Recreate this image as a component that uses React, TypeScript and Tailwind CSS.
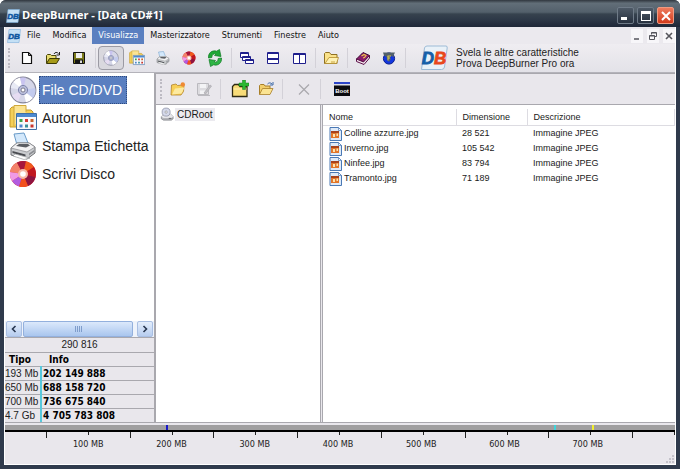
import React from 'react';

interface IconProps {
  className?: string;
}

const NewIcon: React.FC<IconProps> = ({ className = 'w-4 h-4' }) => (
  <svg viewBox="0 0 16 16" className={className} aria-hidden="true">
    <path d="M3.500 2.500h6l3 3v8h-9z" fill="#fff" stroke="#111" strokeWidth="1.200" />
    <path d="M9.500 2.500v3h3" fill="none" stroke="#111" />
  </svg>
);

const OpenIcon: React.FC<IconProps> = ({ className = 'w-4 h-4' }) => (
  <svg viewBox="0 0 16 16" className={className} aria-hidden="true">
    <path d="M1.500 13V5.500l1-1h3l1 1H11v3" fill="#e8dc70" stroke="#4a4608" />
    <path d="M1.500 13.500 4.500 8.500h10L11.500 13.500z" fill="#a69a18" stroke="#3a3806" />
    <path d="M9 4c1-2 3-2 4.500-.5M14.500 2v3h-3" fill="none" stroke="#222" />
  </svg>
);

const SaveIcon: React.FC<IconProps> = ({ className = 'w-4 h-4' }) => (
  <svg viewBox="0 0 16 16" className={className} aria-hidden="true">
    <path d="M2.500 2.500h11v11h-11z" fill="#7b7a18" stroke="#111" />
    <path d="M5 3h6v5H5z" fill="#eee" />
    <path d="M4 9.500h8V14H4z" fill="#151515" />
    <path d="M9 10.500h2V13H9z" fill="#ddd" />
  </svg>
);

const DiscIcon: React.FC<IconProps> = ({ className = 'w-4 h-4' }) => (
  <svg viewBox="0 0 28 28" className={className} aria-hidden="true">
    <circle cx="14" cy="14" r="12.800" fill="#d5d6e8" stroke="#868699" strokeWidth="1.200" />
    <path d="M14 14 4 6a12.500 12.500 0 0 1 7-4.500z" fill="#fff" />
    <path d="M14 14 24 22a12.500 12.500 0 0 1-7 4.300z" fill="#fff" />
    <path d="M14 14 11 1.800a12.500 12.500 0 0 1 6 0z" fill="#c9c4f0" />
    <path d="M14 14 1.800 12a12.500 12.500 0 0 1 2.200-6z" fill="#e8eaf5" />
    <path d="M14 14 26.300 12a12.500 12.500 0 0 1-2.300 10z" fill="#c3cbee" />
    <path d="M14 14 9 25.500a12.500 12.500 0 0 1-6-6z" fill="#e6dcf2" />
    <circle cx="14" cy="14" r="4.600" fill="#b9bdda" stroke="#7f86ad" />
    <circle cx="14" cy="14" r="2" fill="#fff" stroke="#667" strokeWidth=".8" />
  </svg>
);

const BurnIcon: React.FC<IconProps> = ({ className = 'w-4 h-4' }) => (
  <svg viewBox="0 0 28 28" className={className} aria-hidden="true">
    <circle cx="14" cy="14" r="13" fill="#d4242a" />
    <path d="M14 14 1 12A13 13 0 0 1 8 2.500z" fill="#f2826a" />
    <path d="M14 14 8 2.500A13 13 0 0 1 17 1.300z" fill="#a5163c" />
    <path d="M14 14 17 1.300A13 13 0 0 1 25 7z" fill="#ef5a1e" />
    <path d="M14 14 25 7a13 13 0 0 1 1.500 10z" fill="#c01820" />
    <path d="M14 14 26.500 17A13 13 0 0 1 19 26z" fill="#8e1440" />
    <path d="M14 14 19 26a13 13 0 0 1-9 .5z" fill="#f2501e" />
    <path d="M14 14 10 26.500A13 13 0 0 1 3 21z" fill="#b25ce0" />
    <path d="M14 14 3 21a13 13 0 0 1-2-9z" fill="#f09ae6" />
    <circle cx="14" cy="14" r="5" fill="#f6b9a8" />
    <circle cx="14" cy="14" r="2.800" fill="#fff" />
  </svg>
);

const AutorunIcon: React.FC<IconProps> = ({ className = 'w-4 h-4' }) => (
  <svg viewBox="0 0 28 28" className={className} aria-hidden="true">
    <path d="M1 23V5l2-2h6l2 3h11l2 2v15z" fill="#f4cf58" stroke="#c39a2a" />
    <path d="M5 22V1.500h12V8" fill="#fbe493" stroke="#d0a83a" />
    <path d="M7.500 9.500h20v16h-20z" fill="#f7f9fc" stroke="#3f6fa6" />
    <path d="M8 10h19v3H8z" fill="#4d8ad0" />
    <path d="M10.500 15h3v3h-3z" fill="#3fa54a" />
    <path d="M16 15h3v3h-3z" fill="#d83a36" />
    <path d="M21.500 15h3v3h-3z" fill="#c9652c" />
    <path d="M10.500 20.500h3v3h-3z" fill="#4f87d0" />
    <path d="M16 20.500h3v3h-3z" fill="#3a8f9a" />
    <path d="M21.500 20.500h3v3h-3z" fill="#c9362f" />
  </svg>
);

const PrinterIcon: React.FC<IconProps> = ({ className = 'w-4 h-4' }) => (
  <svg viewBox="0 0 28 28" className={className} aria-hidden="true">
    <path d="M8 13 5 2l10-1 4 10z" fill="#d3e8fb" stroke="#6b9cc9" />
    <path d="M2 16 8 11h12l6 4v6l-8 6-16-4z" fill="#c9cbce" stroke="#6e7074" />
    <path d="M2 16 8 11h12l6 4-8 5z" fill="#f3f3f4" stroke="#85878b" strokeWidth=".7" />
    <path d="m7 14 3-2h9l2 1.500-4 2z" fill="#5b5e63" />
    <path d="m3.500 19 13 3.500v2L3.500 21z" fill="#4b4d52" />
    <path d="m6 22 11 3 4 1-6 1.500L4 24z" fill="#fff" stroke="#8c8e92" strokeWidth=".6" />
    <path d="M20 21.500 25 18v2l-5 3.500z" fill="#8b8d92" />
  </svg>
);

const RefreshIcon: React.FC<IconProps> = ({ className = 'w-4 h-4' }) => (
  <svg viewBox="0 0 16 18" className={className} aria-hidden="true">
    <path d="M1.500 9C1 4 5 .8 9.500 2.200L12.500.5 14 7.500 7.500 6.500 9 5C6.500 4.200 4.800 6 4.800 8.500z" fill="#1fa836" stroke="#0f7a22" strokeWidth=".7" />
    <path d="M14.500 9C15 14 11 17.200 6.500 15.800L3.500 17.500 2 10.500 8.500 11.500 7 13C9.500 13.800 11.200 12 11.200 9.500z" fill="#2fb545" stroke="#0f7a22" strokeWidth=".7" />
  </svg>
);

const CascadeIcon: React.FC<IconProps> = ({ className = 'w-4 h-4' }) => (
  <svg viewBox="0 0 16 16" className={className} aria-hidden="true">
    <g fill="#fff" stroke="#1f1f8c">
      <path d="M1.500 2.500h8v5h-8zM1.500 3.500h8" />
      <path d="M3.500 6.500h8v4h-8zM3.500 7.500h8" />
      <path d="M6.500 9.500h8v4h-8zM6.500 10.500h8" />
    </g>
  </svg>
);

const TileHIcon: React.FC<IconProps> = ({ className = 'w-4 h-4' }) => (
  <svg viewBox="0 0 16 16" className={className} aria-hidden="true">
    <path d="M2.500 2.500h11v11h-11zM2.500 3.500h11M2.500 8.500h11M2.500 9.500h11" fill="#fff" stroke="#1f1f8c" />
  </svg>
);

const TileVIcon: React.FC<IconProps> = ({ className = 'w-4 h-4' }) => (
  <svg viewBox="0 0 16 16" className={className} aria-hidden="true">
    <path d="M2.500 3.500h12v10h-12zM2.500 4.500h12M8.500 3.500v10" fill="#fff" stroke="#1f1f8c" />
  </svg>
);

const FolderIcon: React.FC<IconProps> = ({ className = 'w-4 h-4' }) => (
  <svg viewBox="0 0 16 16" className={className} aria-hidden="true">
    <path d="M1.500 13.500V3.500l1-1h4l1.500 2h6v9z" fill="#fae28a" stroke="#8f7022" />
    <path d="m2 13.500 4-6h9.500l-2 6z" fill="#fdf1b4" stroke="#b48d2d" strokeWidth=".8" />
    <path d="M8 12h4" stroke="#caa442" />
  </svg>
);

const BookIcon: React.FC<IconProps> = ({ className = 'w-4 h-4' }) => (
  <svg viewBox="0 0 16 16" className={className} aria-hidden="true">
    <path d="M1.500 9 8 2.500l6.500 3L8.500 12z" fill="#8a1b6c" stroke="#3d0b33" />
    <path d="m1.500 9 7 3 6-6.500v2.500L9 14.500l-7.500-3z" fill="#f5e6ee" stroke="#5a1048" />
    <path d="m6.500 6 2.500-1.500 2 1-1.500 2-1.500.3" fill="none" stroke="#f0c94a" strokeWidth="1.200" />
  </svg>
);

const GlobeIcon: React.FC<IconProps> = ({ className = 'w-4 h-4' }) => (
  <svg viewBox="0 0 16 16" className={className} aria-hidden="true">
    <circle cx="8" cy="8.500" r="5.600" fill="#1236e0" stroke="#0c1e8a" />
    <path d="M2 2.500h12l-1.500 3 .5 2-2.500-1.500-1.500 1L10 9l-2 3-2-2.500L5.500 7 3 5.500z" fill="#51606a" />
    <path d="M6.500 6h3.500M7 6v4.500M7 8h2" fill="none" stroke="#e3d24c" strokeWidth=".9" />
  </svg>
);

const NewFolderIcon: React.FC<IconProps> = ({ className = 'w-4 h-4' }) => (
  <svg viewBox="0 0 16 16" className={className} aria-hidden="true">
    <path d="M1 14 1.500 4l4.500-1 1.500 1.500L14 4l-.5 6.500L11 14z" fill="#f7cf56" stroke="#b2832b" strokeWidth=".8" />
    <path d="m2 13.500 3-6 9.500-1-3 6z" fill="#fdeaa0" />
    <circle cx="12.800" cy="3.500" r="2.200" fill="#ef8a32" />
  </svg>
);

const EditDisabledIcon: React.FC<IconProps> = ({ className = 'w-4 h-4' }) => (
  <svg viewBox="0 0 16 16" className={className} aria-hidden="true">
    <path d="M1.500 2.500h11v11h-11z" fill="#dddce0" stroke="#bab9be" />
    <path d="M4 3h6v4H4zM4 9.500h6V13H4z" fill="#f3f3f5" />
    <path d="m8 12 6-8 1.500 1-6 8z" fill="#c2c1c6" stroke="#aaa9ae" strokeWidth=".7" />
    <path d="M2 14.500h12" stroke="#bab9be" />
  </svg>
);

const AddFolderIcon: React.FC<IconProps> = ({ className = 'w-[18px] h-[18px]' }) => (
  <svg viewBox="0 0 18 18" className={className} aria-hidden="true">
    <path d="M1.500 16.500v-10l2-2h4l1.500 2h7v10z" fill="#f8dc78" stroke="#2f2a12" strokeWidth="1.300" />
    <path d="M2.500 9h13" stroke="#fff2b8" />
    <path d="M11.500 0h3v3H18v3h-3.500v3.500h-3V6H8V3h3.500z" fill="#2cb832" stroke="#128018" strokeWidth=".5" />
  </svg>
);

const OpenFolderIcon: React.FC<IconProps> = ({ className = 'w-4 h-4' }) => (
  <svg viewBox="0 0 16 16" className={className} aria-hidden="true">
    <path d="M1.500 13.500v-9l1-1h3.500l1 1.500h5v3" fill="#f2cf6c" stroke="#a87f28" />
    <path d="m1.500 13.500 3-6h10.500l-3 6z" fill="#fbe493" stroke="#a87f28" strokeWidth=".8" />
    <path d="M9.500 3c1.500-1.500 3-1.500 4.500 0M15 1v3h-3" fill="none" stroke="#3b68a8" />
  </svg>
);

const DeleteIcon: React.FC<IconProps> = ({ className = 'w-4 h-4' }) => (
  <svg viewBox="0 0 16 16" className={className} aria-hidden="true">
    <path d="m3 3.500 10 10M13 3.500 3 13.500" stroke="#a9a8ad" strokeWidth="1.200" />
  </svg>
);

const BootIcon: React.FC<IconProps> = ({ className = 'w-4 h-4' }) => (
  <svg viewBox="0 0 16 16" className={className} aria-hidden="true">
    <path d="M0 1h16v14H0z" fill="#0b0b0f" />
    <path d="M0 1h16v2H0z" fill="#2c44c8" />
    <path d="M0 3h16v1.500H0z" fill="#dcdce4" />
    <text x="8" y="12" textAnchor="middle" fontSize="6" fontWeight="700" fill="#fff" fontFamily="Liberation Sans, sans-serif">Boot</text>
  </svg>
);

const DriveIcon: React.FC<IconProps> = ({ className = 'w-4 h-4' }) => (
  <svg viewBox="0 0 16 16" className={className} aria-hidden="true">
    <path d="m1.500 11 3-3h7.500l3 3v2.500l-2 1.500H4l-2.500-1.500z" fill="#b5b6bb" stroke="#77787e" strokeWidth=".7" />
    <path d="m1.500 11 3-3h7.500l3 3-2 1.500H4z" fill="#e6e6ea" />
    <circle cx="7" cy="5.800" r="4.600" fill="#d5d9ea" stroke="#85899f" strokeWidth=".8" />
    <circle cx="7" cy="5.800" r="1.300" fill="#fff" stroke="#777" strokeWidth=".6" />
    <path d="M10 13h3" stroke="#5a5b60" />
  </svg>
);

const JpegIcon: React.FC<IconProps> = ({ className = 'w-[13px] h-[14px]' }) => (
  <svg viewBox="0 0 13 14" className={className} aria-hidden="true">
    <path d="M1 .5h8.500l3 3v10H1z" fill="#dfeaf8" stroke="#4a79b5" />
    <path d="M9.500.5v3h3z" fill="#fff" stroke="#4a79b5" strokeWidth=".7" />
    <path d="M2 4h8v7H2z" fill="#e2762a" />
    <path d="M2 4h8v2H2z" fill="#a8421c" />
    <path d="M4 7h2v3H4zM7.500 6.500H9V9H7.500z" fill="#fbe3b0" />
  </svg>
);

// Small blue badge used in the title and menu bars
const AppBadge: React.FC<IconProps> = ({ className = 'w-3.5 h-3.5' }) => (
  <svg viewBox="0 0 14 14" className={className} aria-hidden="true">
    <path d="M2 .5h11.500L12 13.500H.5z" fill="#c4e0f5" stroke="#7db0dc" strokeWidth=".6" />
    <text x="7" y="10" textAnchor="middle" fontSize="8" fontWeight="700" fontStyle="italic" fill="#0d559f" stroke="#0d559f" strokeWidth=".5" fontFamily="Liberation Sans, sans-serif">DB</text>
  </svg>
);

const BrandLogo: React.FC = () => (
  <svg viewBox="0 0 28 26" className="w-7 h-[26px]" role="img" aria-label="DB">
    <path d="M1.500 24.500 4.500 3q.5-2 2.500-2h19q1.500 0 1.200 2L24.500 22q-.5 2.500-3 2.500z" fill="#e9f1f8" stroke="#9dbbd6" />
    <text x="14" y="19" textAnchor="middle" fontSize="17" fontWeight="700" fontStyle="italic" strokeWidth=".8" fontFamily="Liberation Sans, sans-serif">
      <tspan fill="#155fa8" stroke="#155fa8">D</tspan>
      <tspan fill="#e8481c" stroke="#e8481c">B</tspan>
    </text>
  </svg>
);

interface ToolButtonProps {
  label: string;
  pressed?: boolean;
  children: React.ReactNode;
}

const ToolButton: React.FC<ToolButtonProps> = ({ label, pressed = false, children }) => (
  <button
    type="button"
    aria-label={label}
    title={label}
    className={`flex h-6 w-[26px] shrink-0 items-center justify-center ${pressed ? 'rounded-sm border border-[#9b9aa3] bg-[#d9d8de]' : ''}`}
  >
    {children}
  </button>
);

const Separator: React.FC = () => (
  <div className="flex h-5 w-1.5 shrink-0 justify-center">
    <div className="w-px bg-[#d3d1d8]" />
  </div>
);

const Grip: React.FC = () => <div className="h-5 border-l-2 border-dotted border-[#bdbbc3]" />;

const menuItems = ['File', 'Modifica', 'Visualizza', 'Masterizzatore', 'Strumenti', 'Finestre', 'Aiuto'];

const sections = [
  { name: 'File CD/DVD', Icon: DiscIcon, selected: true },
  { name: 'Autorun', Icon: AutorunIcon, selected: false },
  { name: 'Stampa Etichetta', Icon: PrinterIcon, selected: false },
  { name: 'Scrivi Disco', Icon: BurnIcon, selected: false },
];

const capacities = [
  { type: '193 Mb', free: '202 149 888' },
  { type: '650 Mb', free: '688 158 720' },
  { type: '700 Mb', free: '736 675 840' },
  { type: '4.7 Gb', free: '4 705 783 808' },
];

const files = [
  { name: 'Colline azzurre.jpg', size: '28 521', kind: 'Immagine JPEG' },
  { name: 'Inverno.jpg', size: '105 542', kind: 'Immagine JPEG' },
  { name: 'Ninfee.jpg', size: '83 794', kind: 'Immagine JPEG' },
  { name: 'Tramonto.jpg', size: '71 189', kind: 'Immagine JPEG' },
];

const RULER_MAX = 800;
const markers = [
  { at: 192, className: 'bg-[#1818c8]' },
  { at: 655, className: 'bg-[#3fd5dc]' },
  { at: 701, className: 'bg-[#f2ee2c]' },
];

const TitleBar: React.FC = () => (
  <header className="flex h-[27px] shrink-0 items-center bg-[linear-gradient(#30363e_0%,#626e78_12%,#53606b_45%,#36424e_52%,#2c3746_75%,#1f2738_100%)] px-1.5 pt-1">
    <AppBadge />
    <h1 className="ml-0.5 flex-1 font-['Open_Sans',sans-serif] text-[11px] font-bold text-white">DeepBurner - [Data CD#1]</h1>
    <div className="flex gap-[3px]">
      <button type="button" aria-label="Minimize" className="flex h-[17px] w-[17px] items-end rounded-xs border border-[#6f7b88] bg-linear-to-b from-[#4e5a67] to-[#27313f] pb-[3px] pl-[3px]">
        <span className="h-[3px] w-1.5 bg-white" />
      </button>
      <button type="button" aria-label="Maximize" className="flex h-[17px] w-[17px] items-center justify-center rounded-xs border border-[#6f7b88] bg-linear-to-b from-[#4e5a67] to-[#27313f]">
        <span className="h-2.5 w-2.5 border border-t-[3px] border-white" />
      </button>
      <button type="button" aria-label="Close" className="flex h-[17px] w-[17px] items-center justify-center rounded-xs border border-[#f09a80] bg-linear-to-b from-[#ee7a5c] to-[#d33a1a]">
        <svg viewBox="0 0 10 10" className="h-2.5 w-2.5"><path d="m1 1 8 8M9 1 1 9" stroke="#fff" strokeWidth="2" /></svg>
      </button>
    </div>
  </header>
);

const MenuBar: React.FC = () => (
  <nav className="flex h-[17px] items-center bg-[#ebe9ee] pl-0.5 font-['DejaVu_Sans_Condensed','DejaVu_Sans',sans-serif] text-[9px] leading-[17px] text-[#111]">
    <AppBadge />
    <div className="flex flex-1">
      {menuItems.map((item) => (
        <button key={item} type="button" className={`px-1.5 ${item === 'Visualizza' ? 'bg-[#5a7fc0] text-white' : ''}`}>
          {item}
        </button>
      ))}
    </div>
    <div className="flex gap-1 text-[#55555c]">
      <button type="button" aria-label="Minimize document" className="flex h-3.5 w-3 items-center justify-center bg-[#f7f6f9]">
        <svg viewBox="0 0 10 10" className="h-2.5 w-2.5"><path d="M2 8h5" stroke="currentColor" strokeWidth="1.500" /></svg>
      </button>
      <button type="button" aria-label="Restore document" className="flex h-3.5 w-3 items-center justify-center bg-[#f7f6f9]">
        <svg viewBox="0 0 10 10" className="h-2.5 w-2.5"><path d="M3.500 3.500v-2h5v4h-2M1.500 4.500h5v4h-5zM1.500 5h5M3.500 2h5" fill="none" stroke="currentColor" /></svg>
      </button>
      <button type="button" aria-label="Close document" className="flex h-3.5 w-3 items-center justify-center bg-[#f7f6f9]">
        <svg viewBox="0 0 10 10" className="h-2.5 w-2.5"><path d="m2 2 6 6M8 2 2 8" stroke="currentColor" strokeWidth="1.600" /></svg>
      </button>
    </div>
  </nav>
);

const MainToolbar: React.FC = () => (
  <div className="flex h-[29px] shrink-0 items-center border-b border-[#b4b3ba] bg-linear-to-b from-[#efedf1] to-[#e3e2e8] pl-[3px]">
    <Grip />
    <div className="ml-1 flex items-center">
      <ToolButton label="Nuovo"><NewIcon /></ToolButton>
      <ToolButton label="Apri"><OpenIcon /></ToolButton>
      <ToolButton label="Salva"><SaveIcon /></ToolButton>
      <Separator />
      <ToolButton label="File CD/DVD" pressed><DiscIcon /></ToolButton>
      <ToolButton label="Autorun"><AutorunIcon /></ToolButton>
      <ToolButton label="Stampa etichetta"><PrinterIcon className="h-3.5 w-3.5" /></ToolButton>
      <ToolButton label="Scrivi disco"><BurnIcon className="h-3.5 w-3.5" /></ToolButton>
      <ToolButton label="Aggiorna"><RefreshIcon className="h-[18px] w-4" /></ToolButton>
      <Separator />
      <ToolButton label="Sovrapponi"><CascadeIcon /></ToolButton>
      <ToolButton label="Affianca orizzontalmente"><TileHIcon /></ToolButton>
      <ToolButton label="Affianca verticalmente"><TileVIcon /></ToolButton>
      <Separator />
      <ToolButton label="Esplora"><FolderIcon /></ToolButton>
      <Separator />
      <ToolButton label="Guida"><BookIcon /></ToolButton>
      <ToolButton label="Sito web"><GlobeIcon /></ToolButton>
      <Separator />
    </div>
    <a href="#pro" className="ml-3 flex items-center gap-2 text-[10px] leading-[11px] text-[#222]">
      <BrandLogo />
      <span>
        Svela le altre caratteristiche
        <br />
        Prova DeepBurner Pro ora
      </span>
    </a>
  </div>
);

const Sidebar: React.FC = () => (
  <aside className="flex w-[149px] shrink-0 flex-col">
    <ul className="flex-1 overflow-hidden bg-white pt-[3px] pl-1 text-sm">
      {sections.map(({ name, Icon, selected }) => (
        <li key={name}>
          <button type="button" className="flex h-7 items-center gap-0.5 whitespace-nowrap text-[#222]">
            <Icon className="h-7 w-7 shrink-0" />
            <span className={selected ? 'flex h-7 items-center border border-dotted border-[#2d4a80] bg-[#5a7fc0] pr-1 pl-0.5 text-white' : 'pl-[3px]'}>
              {name}
            </span>
          </button>
        </li>
      ))}
    </ul>
    <div className="flex h-4 gap-px bg-[#eef3fb] px-px">
      <button type="button" aria-label="Scorri a sinistra" className="flex w-4 items-center justify-center rounded-xs border border-[#a9bfe3] bg-linear-to-b from-[#e4eefc] to-[#b7cdef]">
        <svg viewBox="0 0 8 8" className="h-2 w-2"><path d="M5.500 1 2.500 4l3 3" fill="none" stroke="#27364f" strokeWidth="1.600" /></svg>
      </button>
      <div className="mr-[3px] flex flex-1 items-center justify-center gap-px rounded-xs border border-[#93b0dd] bg-linear-to-b from-[#dce9fb] to-[#a9c6ee]">
        <span className="h-1.5 w-px bg-[#7f9dcb]" />
        <span className="h-1.5 w-px bg-[#7f9dcb]" />
        <span className="h-1.5 w-px bg-[#7f9dcb]" />
        <span className="h-1.5 w-px bg-[#7f9dcb]" />
      </div>
      <button type="button" aria-label="Scorri a destra" className="flex w-4 items-center justify-center rounded-xs border border-[#a9bfe3] bg-linear-to-b from-[#e4eefc] to-[#b7cdef]">
        <svg viewBox="0 0 8 8" className="h-2 w-2"><path d="m2.500 1 3 3-3 3" fill="none" stroke="#27364f" strokeWidth="1.600" /></svg>
      </button>
    </div>
    <table className="w-full table-fixed border-collapse bg-[#e9e7ec] text-left text-[10px] leading-[13px] text-[#222]">
      <caption className="border-y border-[#a9a8ae] bg-[#e9e7ec] text-center leading-[14px]">290 816</caption>
      <colgroup>
        <col className="w-9" />
        <col />
      </colgroup>
      <thead className="font-['DejaVu_Sans_Condensed','DejaVu_Sans',sans-serif] text-[10px] text-black">
        <tr>
          <th className="pl-1">Tipo</th>
          <th className="pl-2">Info</th>
        </tr>
      </thead>
      <tbody>
        {capacities.map((row) => (
          <tr key={row.type} className="border-t border-[#a9a8ae]">
            <td className="whitespace-nowrap">{row.type}</td>
            <td className="border-l-2 border-[#58c8dc] pl-px font-['DejaVu_Sans_Condensed','DejaVu_Sans',sans-serif] text-[10px] font-bold text-black">{row.free}</td>
          </tr>
        ))}
      </tbody>
    </table>
  </aside>
);

const FileList: React.FC = () => (
  <div className="flex-1 bg-white pt-1">
    <table className="w-full table-fixed border-collapse text-left text-[9px] leading-[15px]">
      <colgroup>
        <col className="w-[133px]" />
        <col className="w-[71px]" />
        <col />
      </colgroup>
      <thead>
        <tr className="border-b border-[#dddce2] leading-4">
          <th className="pl-1.5 font-normal">Nome</th>
          <th className="border-l border-[#dddce2] pl-1.5 font-normal">Dimensione</th>
          <th className="border-x border-[#dddce2] pl-1.5 font-normal">Descrizione</th>
        </tr>
      </thead>
      <tbody>
        {files.map((file) => (
          <tr key={file.name}>
            <td className="flex items-center gap-0.5 pl-1.5 whitespace-nowrap">
              <JpegIcon />
              {file.name}
            </td>
            <td className="pl-1.5">{file.size}</td>
            <td className="pl-1.5">{file.kind}</td>
          </tr>
        ))}
      </tbody>
    </table>
  </div>
);

const ProjectPane: React.FC = () => (
  <main className="flex min-w-0 flex-1 flex-col border-l-2 border-[#a9a8ae] text-[10px] text-[#1a1a1a]">
    <div className="flex h-8 shrink-0 items-center border-y border-[#a9a8ae] bg-[#e9e7ec] pl-1">
      <Grip />
      <div className="ml-[3px] flex items-center">
        <ToolButton label="Nuova cartella"><NewFolderIcon /></ToolButton>
        <ToolButton label="Rinomina"><EditDisabledIcon /></ToolButton>
        <Separator />
        <div className="w-1" />
        <ToolButton label="Aggiungi"><AddFolderIcon /></ToolButton>
        <ToolButton label="Apri cartella"><OpenFolderIcon /></ToolButton>
        <Separator />
        <div className="w-1.5" />
        <ToolButton label="Elimina"><DeleteIcon /></ToolButton>
        <Separator />
        <div className="w-1.5" />
        <ToolButton label="Avvio"><BootIcon /></ToolButton>
      </div>
    </div>
    <div className="flex flex-1">
      <div className="w-[164px] shrink-0 bg-white pt-0.5 pl-1">
        <button type="button" className="flex items-center gap-px">
          <DriveIcon className="h-3.5 w-3.5" />
          <span className="bg-[#ebeaef] px-0.5 leading-[13px]">CDRoot</span>
        </button>
      </div>
      <div className="w-[3px] border-x border-[#a9a8ae] bg-[#e9e7ec]" />
      <FileList />
    </div>
  </main>
);

const CapacityRuler: React.FC = () => (
  <footer className="border-t border-[#a9a8ae] bg-[#e9e7ec] pt-0.5 font-['DejaVu_Sans_Condensed','DejaVu_Sans',sans-serif] text-[9px] text-[#222]">
    <div className="relative h-[5px] bg-[#a09fa0]">
      {markers.map((marker) => (
        <div
          key={marker.at}
          className={`absolute inset-y-0 w-0.5 ${marker.className}`}
          style={{ left: `${(marker.at / RULER_MAX) * 100}%` }}
        />
      ))}
    </div>
    <div className="flex h-2 items-start border-t-2 border-black">
      {Array.from({ length: 16 }, (_, i) => (
        <div key={i} className={`flex-1 border-r border-[#222] ${i % 2 === 0 ? 'h-1.5' : 'h-[3px]'}`} />
      ))}
    </div>
    <div className="flex pr-1 leading-3">
      <div className="flex-1" />
      {[100, 200, 300, 400, 500, 600, 700].map((mb) => (
        <div key={mb} className="flex-[2] text-center">{mb} MB</div>
      ))}
      <div className="flex-1" />
    </div>
    <div className="flex h-3.5 items-end justify-end">
      <svg viewBox="0 0 10 10" className="h-2.5 w-2.5" aria-hidden="true">
        <path d="M7 1h2v2H7zM4 4h2v2H4zM7 4h2v2H7zM1 7h2v2H1zM4 7h2v2H4zM7 7h2v2H7z" fill="#c4c2ca" />
      </svg>
    </div>
  </footer>
);

const App: React.FC = () => (
  <div className="flex min-h-screen flex-col overflow-hidden rounded-t-md bg-[#2f3a4c] font-['Liberation_Sans',sans-serif]">
    <TitleBar />
    <div className="mx-1 mb-1 flex flex-1 flex-col border-x border-b border-white bg-[#e9e7ec]">
      <MenuBar />
      <MainToolbar />
      <div className="flex flex-1">
        <Sidebar />
        <ProjectPane />
      </div>
      <CapacityRuler />
    </div>
  </div>
);

export default App;
